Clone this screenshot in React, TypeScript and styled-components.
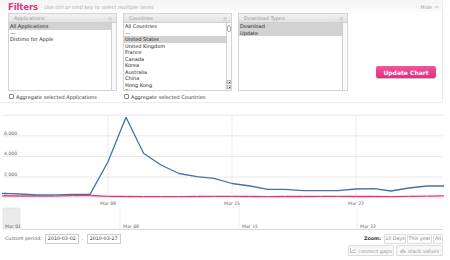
import React from 'react';
import styled, { createGlobalStyle } from 'styled-components';

const GlobalStyle = createGlobalStyle`
  html, body { margin: 0; padding: 0; background: #fff; }
  body {
    font-family: "DejaVu Sans", Verdana, sans-serif;
    width: 450px; height: 260px; overflow: hidden; color: #333;
  }
  * { box-sizing: border-box; }
`;

const PINK = '#e5317f';
const BLUE = '#4572a7';

const Page = styled.div`
  display: flex;
  flex-direction: column;
  width: 450px;
`;

const FilterPanel = styled.section`
  width: 443px;
  height: 103px;
  border-right: 1px solid #ececec;
  border-bottom: 1px solid #ececec;
  background: linear-gradient(#f4f4f4 0, #fafafa 10px, #fff 14px);
  display: flex;
  flex-direction: column;
`;

const PanelHeader = styled.div`
  height: 13px;
  display: flex;
  align-items: center;
  padding: 0 3px 0 8px;
`;

const Title = styled.span`
  font-size: 8.5px;
  font-weight: bold;
  color: ${PINK};
  letter-spacing: -0.1px;
`;

const Hint = styled.span`
  font-size: 5px;
  font-style: italic;
  color: #aaa;
  margin-left: 3px;
  flex: 1;
`;

const HideLink = styled.span`
  font-size: 5px;
  color: #999;
  display: flex;
  align-items: center;
  gap: 2px;
`;

const PanelBody = styled.div`
  display: flex;
  padding-left: 8px;
  gap: 6px;
  flex: 1;
`;

const FilterColumn = styled.div`
  width: ${(p: { $w: number }) => p.$w}px;
  display: flex;
  flex-direction: column;
`;

const ListBox = styled.div`
  height: 78px;
  border: 1px solid #d4d4d4;
  display: flex;
  flex-direction: column;
  background: #fff;
`;

const ListHeader = styled.div`
  height: 9px;
  background: linear-gradient(#f2f2f2, #e2e2e2);
  border-bottom: 1px solid #d0d0d0;
  display: flex;
  align-items: center;
  padding: 0 3px 0 5px;
  font-size: 5px;
  color: #999;
`;

const HeaderLabel = styled.span`
  flex: 1;
`;

const HeaderIcons = styled.span`
  font-size: 4px;
  color: #bbb;
  letter-spacing: 1px;
`;

const ListArea = styled.div`
  flex: 1;
  display: flex;
  min-height: 0;
`;

const Items = styled.div`
  flex: 1;
  display: flex;
  flex-direction: column;
  overflow: hidden;
`;

const Item = styled.div<{ $selected?: boolean }>`
  flex: none;
  height: 6.5px;
  line-height: 6.5px;
  font-size: 5px;
  padding-left: 1px;
  white-space: nowrap;
  color: #222;
  background: ${(p) => (p.$selected ? '#d2d2d2' : 'transparent')};
`;

const ScrollTrack = styled.div`
  width: 5px;
  border-left: 1px solid #cfcfcf;
  background: #fafafa;
  display: flex;
  flex-direction: column;
  justify-content: space-between;
  padding: 1px 0;
`;

const Thumb = styled.div`
  height: 7px;
  margin: 1px 0 0 0;
  border: 1px solid #aaa;
  border-radius: 2px;
  background: #fff;
`;

const Arrows = styled.div`
  display: flex;
  flex-direction: column;
  gap: 1px;
`;

const Arrow = styled.div`
  height: 4px;
  border: 1px solid #bbb;
  background: #f4f4f4;
  display: flex;
  align-items: center;
  justify-content: center;
  &::after {
    content: '';
    width: 1px;
    height: 1px;
    background: #333;
  }
`;

const CheckRow = styled.label`
  display: flex;
  align-items: center;
  gap: 2px;
  height: 9px;
  margin-top: 1px;
  padding-left: 1px;
  font-size: 5px;
  color: #333;
  white-space: nowrap;
`;

const Box = styled.span`
  width: 5px;
  height: 5px;
  border: 1px solid #888;
  background: #fff;
  border-radius: 1px;
`;

const ButtonCell = styled.div`
  flex: 1;
  display: flex;
  justify-content: flex-end;
  align-items: flex-start;
  padding: 53px 6px 0 0;
`;

const UpdateButton = styled.button`
  width: 60px;
  height: 12px;
  border: none;
  border-radius: 2px;
  background: linear-gradient(#f3559b, #e0307c);
  box-shadow: 0 1px 1px rgba(0, 0, 0, 0.25);
  color: #fff;
  font-family: "DejaVu Sans", Verdana, sans-serif;
  font-size: 6px;
  font-weight: bold;
  padding: 0;
`;

const ChartSvg = styled.svg`
  display: block;
  width: 450px;
  height: 129px;
`;

const ControlRow = styled.div`
  display: flex;
  align-items: center;
  justify-content: space-between;
  height: 13px;
  padding: 0 7px 0 5px;
`;

const ButtonRow = styled.div`
  display: flex;
  justify-content: flex-end;
  gap: 2px;
  height: 12px;
  padding-right: 7px;
`;

const Group = styled.div`
  display: flex;
  align-items: center;
  gap: 2px;
`;

const ButtonGroup = styled.div`
  display: flex;
  align-items: center;
  gap: 1px;
`;

const Label = styled.span<{ $bold?: boolean }>`
  font-size: 4.8px;
  color: ${(p) => (p.$bold ? '#333' : '#666')};
  font-weight: ${(p) => (p.$bold ? 'bold' : 'normal')};
  margin-right: 1px;
`;

const DateInput = styled.span`
  width: 34px;
  height: 10px;
  border: 1px solid #ccc;
  background: #fff;
  font-size: 4.8px;
  color: #333;
  display: flex;
  align-items: center;
  justify-content: center;
`;

const Dash = styled.span`
  font-size: 5px;
  color: #aaa;
  margin: 0 1px;
`;

const ZoomButton = styled.span<{ $w: number }>`
  width: ${(p) => p.$w}px;
  height: 10px;
  border: 1px solid #ddd;
  border-radius: 1px;
  background: #fcfcfc;
  font-size: 4.8px;
  color: #888;
  display: flex;
  align-items: center;
  justify-content: center;
`;

const ToolButton = styled.span<{ $w: number }>`
  width: ${(p) => p.$w}px;
  height: 11px;
  border: 1px solid #ddd;
  border-radius: 1px;
  background: #f7f7f7;
  font-size: 5px;
  color: #999;
  display: flex;
  align-items: center;
  justify-content: center;
  gap: 2px;
`;

const blue: [number, number][] = [
  [2, 193.3], [20, 194], [37, 195], [55, 194.8], [73, 194.4], [90, 194.4],
  [108, 161.7], [126, 117.3], [143.5, 153.3], [161, 165], [179, 173.5],
  [197, 176.7], [214, 178.3], [232, 183.5], [250, 186], [268, 189.3],
  [285, 189.3], [303, 190.7], [321, 190.7], [338, 190.7], [356, 189],
  [374, 188.7], [391, 191], [409, 188], [427, 186], [444, 186],
];

const pinkY = [195.8, 196, 196.2, 196.1, 195.6, 195.5, 196.3, 196.5, 196.6, 196.6, 196.6,
  196.5, 196.4, 196.3, 196.5, 196.6, 196.5, 196.5, 196.4, 196.4, 196.5, 196.5, 196.6,
  196.4, 196.1, 195.9];

const pts = (a: [number, number][]) => a.map(([x, y]) => `${x},${y}`).join(' ');

const grid = [
  { y: 115.3, label: '' },
  { y: 135.9, label: '6,000' },
  { y: 156.5, label: '4,000' },
  { y: 177.1, label: '2,000' },
  { y: 197.7, label: '0' },
];

function Chart() {
  const pink: [number, number][] = blue.map(([x], i) => [x, pinkY[i]]);
  return (
    <ChartSvg viewBox="0 103 450 129">
      {grid.map((g) => (
        <g key={g.y}>
          <line x1={3} x2={443} y1={g.y} y2={g.y} stroke="#e2e2e2" strokeWidth={0.8} />
          {g.label && (
            <text x={4} y={g.y - 1.4} fontSize={4.6} fill="#666" fontFamily="DejaVu Sans, sans-serif">
              {g.label}
            </text>
          )}
        </g>
      ))}
      {[108, 232, 356].map((x) => (
        <line key={x} x1={x} x2={x} y1={115.3} y2={197.7} stroke="#e6e6e6" strokeWidth={0.8} />
      ))}
      <polyline points={pts(pink)} fill="none" stroke={PINK} strokeWidth={1.3} />
      {blue.map(([x]) => (
        <line key={x} x1={x} x2={x} y1={195} y2={198} stroke="#fff" strokeWidth={0.4} opacity={0.7} />
      ))}
      <polyline points={pts(blue)} fill="none" stroke={BLUE} strokeWidth={1.3} strokeLinejoin="round" />
      {[['Mar 08', 108], ['Mar 15', 232], ['Mar 22', 356]].map(([t, x]) => (
        <text key={t as string} x={x as number} y={204.8} textAnchor="middle" fontSize={4.6} fill="#666" fontFamily="DejaVu Sans, sans-serif">
          {t}
        </text>
      ))}
      <rect x={3} y={208} width={17} height={21} fill="#ebebeb" stroke="#dcdcdc" strokeWidth={0.6} />
      {[120, 239, 357].map((x) => (
        <line key={x} x1={x} x2={x} y1={208} y2={229} stroke="#eeeeee" strokeWidth={0.8} />
      ))}
      <line x1={20} x2={443} y1={229.5} y2={229.5} stroke="#cfcfcf" strokeWidth={0.8} />
      {[['Mar 01', 5], ['Mar 08', 123], ['Mar 15', 242], ['Mar 22', 360]].map(([t, x]) => (
        <text key={t as string} x={x as number} y={227.6} fontSize={4.6} fill="#666" fontFamily="DejaVu Sans, sans-serif">
          {t}
        </text>
      ))}
    </ChartSvg>
  );
}

function Scroll({ withThumb }: { withThumb?: boolean }) {
  return (
    <ScrollTrack>
      {withThumb ? <Thumb /> : <span />}
      {withThumb ? (
        <Arrows>
          <Arrow />
          <Arrow />
        </Arrows>
      ) : (
        <span />
      )}
    </ScrollTrack>
  );
}

function Filter({ title, items, selected, width, check, thumb }: {
  title: string; items: string[]; selected: number[]; width: number; check?: string; thumb?: boolean;
}) {
  return (
    <FilterColumn $w={width}>
      <ListBox>
        <ListHeader>
          <HeaderLabel>{title}</HeaderLabel>
          <HeaderIcons>- ▤</HeaderIcons>
        </ListHeader>
        <ListArea>
          <Items>
            {items.map((it, i) => (
              <Item key={i} $selected={selected.includes(i)}>{it}</Item>
            ))}
          </Items>
          <Scroll withThumb={thumb} />
        </ListArea>
      </ListBox>
      {check && (
        <CheckRow>
          <Box />
          {check}
        </CheckRow>
      )}
    </FilterColumn>
  );
}

function ChartIcon() {
  return (
    <svg width="6" height="5" viewBox="0 0 6 5">
      <path d="M0.5 0 V4.5 H6" fill="none" stroke="#aaa" strokeWidth="0.7" />
      <path d="M1.5 3.5 L3 2 L4 3 L5.5 1" fill="none" stroke="#aaa" strokeWidth="0.6" />
    </svg>
  );
}

function StackIcon() {
  return (
    <svg width="6" height="5" viewBox="0 0 6 5">
      <rect x="0.5" y="2" width="1.3" height="3" fill="#bbb" />
      <rect x="2.4" y="1" width="1.3" height="4" fill="#bbb" />
      <rect x="4.3" y="2.5" width="1.3" height="2.5" fill="#bbb" />
    </svg>
  );
}

export default function App() {
  return (
    <Page>
      <GlobalStyle />
      <FilterPanel>
        <PanelHeader>
          <Title>Filters</Title>
          <Hint>- Use ctrl or cmd key to select multiple items</Hint>
          <HideLink>
            Hide
            <svg width="5" height="4" viewBox="0 0 5 4">
              <path d="M0.5 3.2 L2.5 1 L4.5 3.2" fill="none" stroke="#999" strokeWidth="0.7" />
            </svg>
          </HideLink>
        </PanelHeader>
        <PanelBody>
          <Filter
            title="Applications"
            width={109}
            items={['All Applications', '---', 'Distimo for Apple']}
            selected={[0]}
            check="Aggregate selected Applications"
          />
          <Filter
            title="Countries"
            width={109}
            thumb
            items={['All Countries', '---', 'United States', 'United Kingdom', 'France', 'Canada', 'Korea', 'Australia', 'China', 'Hong Kong', 'Singapore']}
            selected={[2]}
            check="Aggregate selected Countries"
          />
          <Filter
            title="Download Types"
            width={110}
            items={['Download', 'Update']}
            selected={[0, 1]}
          />
          <ButtonCell>
            <UpdateButton>Update Chart</UpdateButton>
          </ButtonCell>
        </PanelBody>
      </FilterPanel>
      <Chart />
      <ControlRow>
        <Group>
          <Label>Custom period:</Label>
          <DateInput>2010-03-02</DateInput>
          <Dash>-</Dash>
          <DateInput>2010-03-27</DateInput>
        </Group>
        <Group>
          <Label $bold>Zoom:</Label>
          <ButtonGroup>
            <ZoomButton $w={22}>10 Days</ZoomButton>
            <ZoomButton $w={25}>This year</ZoomButton>
            <ZoomButton $w={10}>All</ZoomButton>
          </ButtonGroup>
        </Group>
      </ControlRow>
      <ButtonRow>
        <ToolButton $w={46}><ChartIcon />connect gaps</ToolButton>
        <ToolButton $w={47}><StackIcon />stack values</ToolButton>
      </ButtonRow>
    </Page>
  );
}
